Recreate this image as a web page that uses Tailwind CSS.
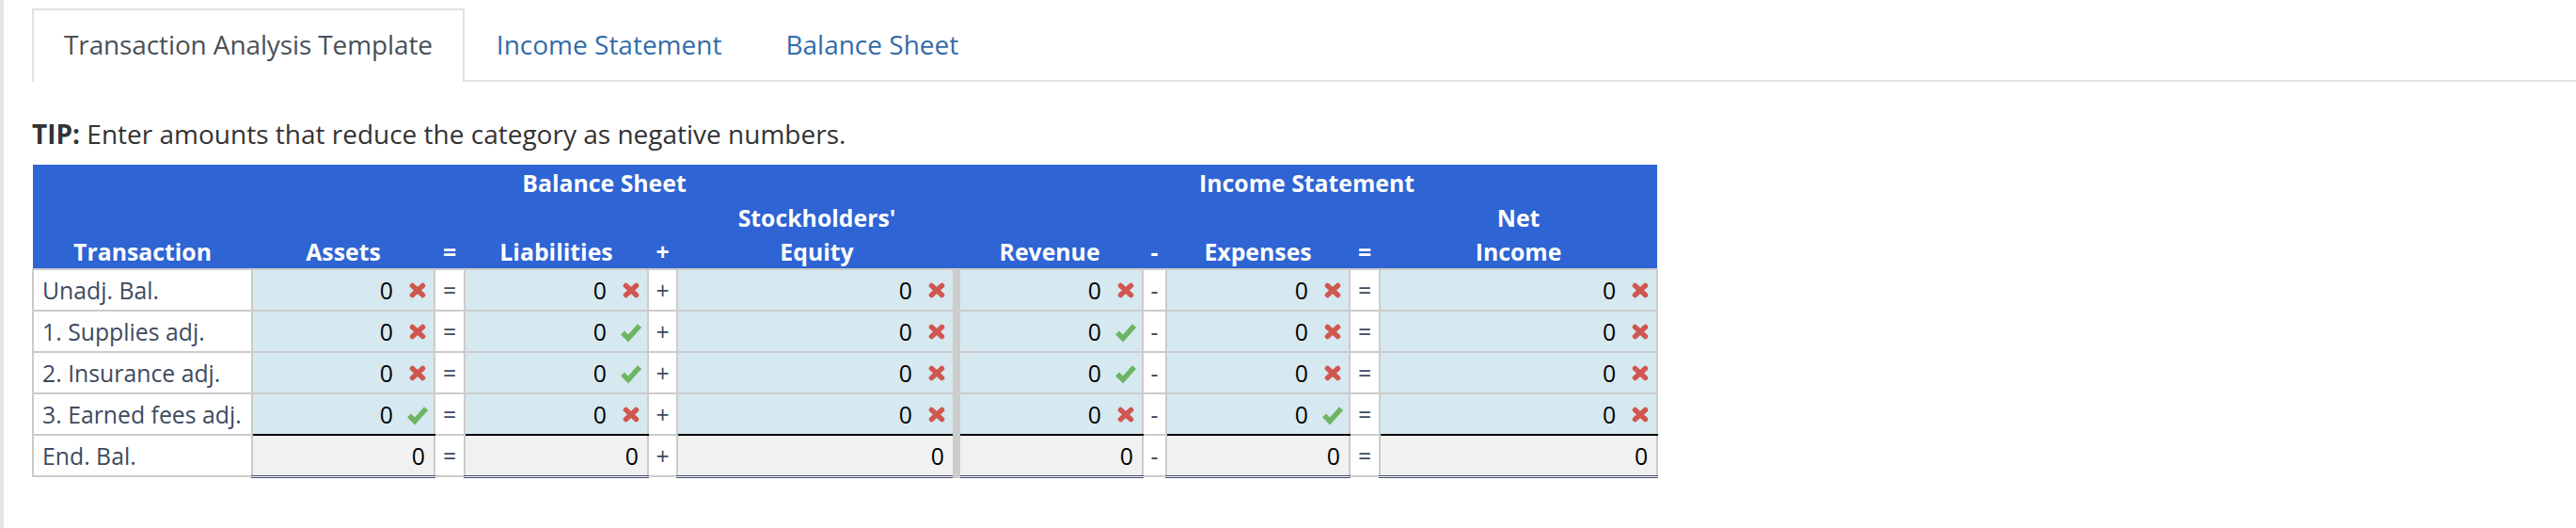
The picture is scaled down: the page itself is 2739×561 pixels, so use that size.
<!DOCTYPE html>
<html lang="en">

<head>
  <meta charset="UTF-8" />
  <title>Transaction Analysis Template</title>
  <script src="https://cdn.jsdelivr.net/npm/@tailwindcss/browser@4"></script>
</head>

<body class="bg-white font-['Open_Sans',sans-serif] text-[#333]">
  <div class="min-h-[561px] border-l-[4px] border-[#e4e4e4] pl-[30px] pt-[9px]">

    <!-- tabs -->
    <ul class="flex border-b-2 border-[#dee2e6] text-[28px] leading-[38px]">
      <li class="-mb-[2px] border-2 border-b-0 border-[#dee2e6] bg-white px-8 pt-[17px] pb-[19px] tracking-[-0.12px] text-[#495057]">Transaction Analysis Template</li>
      <li class="border-2 border-transparent px-8 pt-[17px] pb-[17px] text-[#336ba8]">Income Statement</li>
      <li class="border-2 border-transparent px-8 pt-[17px] pb-[17px] text-[#336ba8]">Balance Sheet</li>
    </ul>

    <p class="mt-[36px] mb-[14px] text-[28px] leading-[38px]"><b>TIP:</b> Enter amounts that reduce the category as negative numbers.</p>

    <table class="w-[1727px] table-fixed border-collapse text-[24.8px]">
      <colgroup>
        <col class="w-[233px]" />
        <col class="w-[194px]" />
        <col class="w-[32px]" />
        <col class="w-[195px]" />
        <col class="w-[31px]" />
        <col class="w-[297px]" />
        <col class="w-[198px]" />
        <col class="w-[25px]" />
        <col class="w-[195px]" />
        <col class="w-[32px]" />
        <col class="w-[295px]" />
      </colgroup>
      <thead class="bg-[#2e64d3] text-center leading-[36px] text-white">
        <tr>
          <th class="h-[38px]"></th>
          <th colspan="5">Balance Sheet</th>
          <th colspan="5">Income Statement</th>
        </tr>
        <tr>
          <th class="h-[36px]" colspan="5"></th>
          <th>Stockholders'</th>
          <th colspan="4"></th>
          <th>Net</th>
        </tr>
        <tr>
          <th class="h-[36px]">Transaction</th>
          <th>Assets</th>
          <th>=</th>
          <th>Liabilities</th>
          <th>+</th>
          <th>Equity</th>
          <th>Revenue</th>
          <th>-</th>
          <th>Expenses</th>
          <th>=</th>
          <th>Income</th>
        </tr>
      </thead>
      <tbody class="leading-[32px]">
        <tr>
          <td class="h-[44px] border-2 border-[#ccc] pl-[9px] text-[#3e4a60]">Unadj. Bal.</td>
          <td class="border-2 border-[#ccc] bg-[#d6e8f0]"><div class="flex items-center justify-end text-black">0<svg class="mr-[6px] ml-[15px] h-[24px] w-[22px]" viewBox="0 0 22 24"><use href="#x" /></svg></div></td>
          <td class="border-2 border-[#ccc] text-center text-[#3e4a60]">=</td>
          <td class="border-2 border-[#ccc] bg-[#d6e8f0]"><div class="flex items-center justify-end text-black">0<svg class="mr-[6px] ml-[15px] h-[24px] w-[22px]" viewBox="0 0 22 24"><use href="#x" /></svg></div></td>
          <td class="border-2 border-[#ccc] text-center text-[#3e4a60]">+</td>
          <td class="border-2 border-r-8 border-[#ccc] bg-[#d6e8f0]"><div class="flex items-center justify-end text-black">0<svg class="mr-[6px] ml-[15px] h-[24px] w-[22px]" viewBox="0 0 22 24"><use href="#x" /></svg></div></td>
          <td class="border-2 border-l-8 border-[#ccc] bg-[#d6e8f0]"><div class="flex items-center justify-end text-black">0<svg class="mr-[6px] ml-[15px] h-[24px] w-[22px]" viewBox="0 0 22 24"><use href="#x" /></svg></div></td>
          <td class="border-2 border-[#ccc] text-center text-[#3e4a60]">-</td>
          <td class="border-2 border-[#ccc] bg-[#d6e8f0]"><div class="flex items-center justify-end text-black">0<svg class="mr-[6px] ml-[15px] h-[24px] w-[22px]" viewBox="0 0 22 24"><use href="#x" /></svg></div></td>
          <td class="border-2 border-[#ccc] text-center text-[#3e4a60]">=</td>
          <td class="border-2 border-[#ccc] bg-[#d6e8f0]"><div class="flex items-center justify-end text-black">0<svg class="mr-[6px] ml-[15px] h-[24px] w-[22px]" viewBox="0 0 22 24"><use href="#x" /></svg></div></td>
        </tr>
        <tr>
          <td class="h-[44px] border-2 border-[#ccc] pl-[9px] text-[#3e4a60]">1. Supplies adj.</td>
          <td class="border-2 border-[#ccc] bg-[#d6e8f0]"><div class="flex items-center justify-end text-black">0<svg class="mr-[6px] ml-[15px] h-[24px] w-[22px]" viewBox="0 0 22 24"><use href="#x" /></svg></div></td>
          <td class="border-2 border-[#ccc] text-center text-[#3e4a60]">=</td>
          <td class="border-2 border-[#ccc] bg-[#d6e8f0]"><div class="flex items-center justify-end text-black">0<svg class="mr-[6px] ml-[15px] h-[24px] w-[22px]" viewBox="0 0 22 24"><use href="#c" /></svg></div></td>
          <td class="border-2 border-[#ccc] text-center text-[#3e4a60]">+</td>
          <td class="border-2 border-r-8 border-[#ccc] bg-[#d6e8f0]"><div class="flex items-center justify-end text-black">0<svg class="mr-[6px] ml-[15px] h-[24px] w-[22px]" viewBox="0 0 22 24"><use href="#x" /></svg></div></td>
          <td class="border-2 border-l-8 border-[#ccc] bg-[#d6e8f0]"><div class="flex items-center justify-end text-black">0<svg class="mr-[6px] ml-[15px] h-[24px] w-[22px]" viewBox="0 0 22 24"><use href="#c" /></svg></div></td>
          <td class="border-2 border-[#ccc] text-center text-[#3e4a60]">-</td>
          <td class="border-2 border-[#ccc] bg-[#d6e8f0]"><div class="flex items-center justify-end text-black">0<svg class="mr-[6px] ml-[15px] h-[24px] w-[22px]" viewBox="0 0 22 24"><use href="#x" /></svg></div></td>
          <td class="border-2 border-[#ccc] text-center text-[#3e4a60]">=</td>
          <td class="border-2 border-[#ccc] bg-[#d6e8f0]"><div class="flex items-center justify-end text-black">0<svg class="mr-[6px] ml-[15px] h-[24px] w-[22px]" viewBox="0 0 22 24"><use href="#x" /></svg></div></td>
        </tr>
        <tr>
          <td class="h-[44px] border-2 border-[#ccc] pl-[9px] text-[#3e4a60]">2. Insurance adj.</td>
          <td class="border-2 border-[#ccc] bg-[#d6e8f0]"><div class="flex items-center justify-end text-black">0<svg class="mr-[6px] ml-[15px] h-[24px] w-[22px]" viewBox="0 0 22 24"><use href="#x" /></svg></div></td>
          <td class="border-2 border-[#ccc] text-center text-[#3e4a60]">=</td>
          <td class="border-2 border-[#ccc] bg-[#d6e8f0]"><div class="flex items-center justify-end text-black">0<svg class="mr-[6px] ml-[15px] h-[24px] w-[22px]" viewBox="0 0 22 24"><use href="#c" /></svg></div></td>
          <td class="border-2 border-[#ccc] text-center text-[#3e4a60]">+</td>
          <td class="border-2 border-r-8 border-[#ccc] bg-[#d6e8f0]"><div class="flex items-center justify-end text-black">0<svg class="mr-[6px] ml-[15px] h-[24px] w-[22px]" viewBox="0 0 22 24"><use href="#x" /></svg></div></td>
          <td class="border-2 border-l-8 border-[#ccc] bg-[#d6e8f0]"><div class="flex items-center justify-end text-black">0<svg class="mr-[6px] ml-[15px] h-[24px] w-[22px]" viewBox="0 0 22 24"><use href="#c" /></svg></div></td>
          <td class="border-2 border-[#ccc] text-center text-[#3e4a60]">-</td>
          <td class="border-2 border-[#ccc] bg-[#d6e8f0]"><div class="flex items-center justify-end text-black">0<svg class="mr-[6px] ml-[15px] h-[24px] w-[22px]" viewBox="0 0 22 24"><use href="#x" /></svg></div></td>
          <td class="border-2 border-[#ccc] text-center text-[#3e4a60]">=</td>
          <td class="border-2 border-[#ccc] bg-[#d6e8f0]"><div class="flex items-center justify-end text-black">0<svg class="mr-[6px] ml-[15px] h-[24px] w-[22px]" viewBox="0 0 22 24"><use href="#x" /></svg></div></td>
        </tr>
        <tr>
          <td class="h-[44px] border-2 border-[#ccc] pl-[9px] text-[#3e4a60]">3. Earned fees adj.</td>
          <td class="border-2 border-b-black border-[#ccc] bg-[#d6e8f0]"><div class="flex items-center justify-end text-black">0<svg class="mr-[6px] ml-[15px] h-[24px] w-[22px]" viewBox="0 0 22 24"><use href="#c" /></svg></div></td>
          <td class="border-2 border-[#ccc] text-center text-[#3e4a60]">=</td>
          <td class="border-2 border-b-black border-[#ccc] bg-[#d6e8f0]"><div class="flex items-center justify-end text-black">0<svg class="mr-[6px] ml-[15px] h-[24px] w-[22px]" viewBox="0 0 22 24"><use href="#x" /></svg></div></td>
          <td class="border-2 border-[#ccc] text-center text-[#3e4a60]">+</td>
          <td class="border-2 border-r-8 border-b-black border-[#ccc] bg-[#d6e8f0]"><div class="flex items-center justify-end text-black">0<svg class="mr-[6px] ml-[15px] h-[24px] w-[22px]" viewBox="0 0 22 24"><use href="#x" /></svg></div></td>
          <td class="border-2 border-l-8 border-b-black border-[#ccc] bg-[#d6e8f0]"><div class="flex items-center justify-end text-black">0<svg class="mr-[6px] ml-[15px] h-[24px] w-[22px]" viewBox="0 0 22 24"><use href="#x" /></svg></div></td>
          <td class="border-2 border-[#ccc] text-center text-[#3e4a60]">-</td>
          <td class="border-2 border-b-black border-[#ccc] bg-[#d6e8f0]"><div class="flex items-center justify-end text-black">0<svg class="mr-[6px] ml-[15px] h-[24px] w-[22px]" viewBox="0 0 22 24"><use href="#c" /></svg></div></td>
          <td class="border-2 border-[#ccc] text-center text-[#3e4a60]">=</td>
          <td class="border-2 border-b-black border-[#ccc] bg-[#d6e8f0]"><div class="flex items-center justify-end text-black">0<svg class="mr-[6px] ml-[15px] h-[24px] w-[22px]" viewBox="0 0 22 24"><use href="#x" /></svg></div></td>
        </tr>
        <tr>
          <td class="h-[44px] border-2 border-[#ccc] pl-[9px] text-[#3e4a60]">End. Bal.</td>
          <td class="border-2 border-b-[3px] border-[#ccc] border-b-[#3e4a6b] bg-[#f1f1f1] pr-[9px] text-right text-black [border-bottom-style:double]">0</td>
          <td class="border-2 border-[#ccc] text-center text-[#3e4a60]">=</td>
          <td class="border-2 border-b-[3px] border-[#ccc] border-b-[#3e4a6b] bg-[#f1f1f1] pr-[9px] text-right text-black [border-bottom-style:double]">0</td>
          <td class="border-2 border-[#ccc] text-center text-[#3e4a60]">+</td>
          <td class="border-2 border-r-8 border-b-[3px] border-[#ccc] border-b-[#3e4a6b] bg-[#f1f1f1] pr-[9px] text-right text-black [border-bottom-style:double]">0</td>
          <td class="border-2 border-l-8 border-b-[3px] border-[#ccc] border-b-[#3e4a6b] bg-[#f1f1f1] pr-[9px] text-right text-black [border-bottom-style:double]">0</td>
          <td class="border-2 border-[#ccc] text-center text-[#3e4a60]">-</td>
          <td class="border-2 border-b-[3px] border-[#ccc] border-b-[#3e4a6b] bg-[#f1f1f1] pr-[9px] text-right text-black [border-bottom-style:double]">0</td>
          <td class="border-2 border-[#ccc] text-center text-[#3e4a60]">=</td>
          <td class="border-2 border-b-[3px] border-[#ccc] border-b-[#3e4a6b] bg-[#f1f1f1] pr-[9px] text-right text-black [border-bottom-style:double]">0</td>
        </tr>
      </tbody>
    </table>
  </div>

  <!-- marks reused in the input cells -->
  <svg class="hidden">
    <symbol id="x" viewBox="0 0 22 24">
      <path d="M5.5 7.5 16.5 17.5M16.5 7.5 5.5 17.5" stroke="#d0574f" stroke-width="5.5" stroke-linecap="round" fill="none" />
    </symbol>
    <symbol id="c" viewBox="0 0 22 24">
      <path d="M2 13.5 8 19.5 20 6" stroke="#6db565" stroke-width="5.5" fill="none" />
    </symbol>
  </svg>
</body>

</html>
